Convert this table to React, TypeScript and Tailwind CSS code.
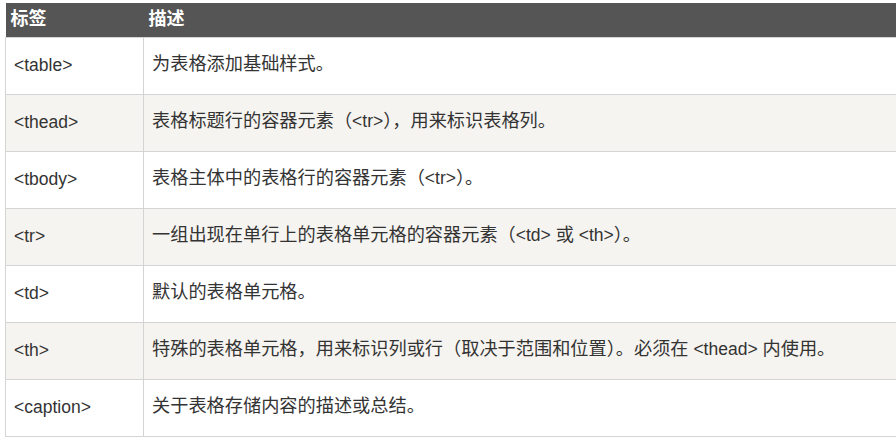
import React from "react";

const rows: [string, string][] = [
  ["<table>", "为表格添加基础样式。"],
  ["<thead>", "表格标题行的容器元素（<tr>），用来标识表格列。"],
  ["<tbody>", "表格主体中的表格行的容器元素（<tr>）。"],
  ["<tr>", "一组出现在单行上的表格单元格的容器元素（<td> 或 <th>）。"],
  ["<td>", "默认的表格单元格。"],
  ["<th>", "特殊的表格单元格，用来标识列或行（取决于范围和位置）。必须在 <thead> 内使用。"],
  ["<caption>", "关于表格存储内容的描述或总结。"],
];

function Mixed({ text }: { text: string }) {
  const parts = text.split(/([\x00-\x7f]+)/).filter((p) => p.length > 0);
  return (
    <>
      {parts.map((p, i) =>
        /^[\x00-\x7f]+$/.test(p) ? (
          <span key={i}>{p}</span>
        ) : (
          <span key={i} className="text-[18.2px]">
            {p}
          </span>
        )
      )}
    </>
  );
}

export default function App() {
  return (
    <div
      className="w-[896px] h-[445px] overflow-hidden bg-white pl-[5px] pt-[3px] text-[#333]"
      style={{ fontFamily: '"Liberation Sans", Arial, "Noto Sans CJK SC", sans-serif' }}
    >
      <table className="w-[1000px] border-collapse text-[17.5px] table-fixed">
        <colgroup>
          <col className="w-[138px]" />
          <col />
        </colgroup>
        <thead>
          <tr className="h-[34px] bg-[#555555] text-white">
            <th className="pl-[5px] text-left font-bold align-middle text-[18px]">标签</th>
            <th className="pl-[5px] text-left font-bold align-middle text-[18px]">描述</th>
          </tr>
        </thead>
        <tbody>
          {rows.map(([tag, desc], i) => (
            <tr key={tag} className={i % 2 === 1 ? "h-[57px] bg-[#f6f4f0]" : "h-[57px] bg-white"}>
              <td className="border border-[#d4d4d4] pl-[8px] pb-[1px] align-middle">{tag}</td>
              <td className="border border-[#d4d4d4] pl-[8px] pb-[1px] align-middle whitespace-nowrap">
                <Mixed text={desc} />
              </td>
            </tr>
          ))}
        </tbody>
      </table>
    </div>
  );
}
